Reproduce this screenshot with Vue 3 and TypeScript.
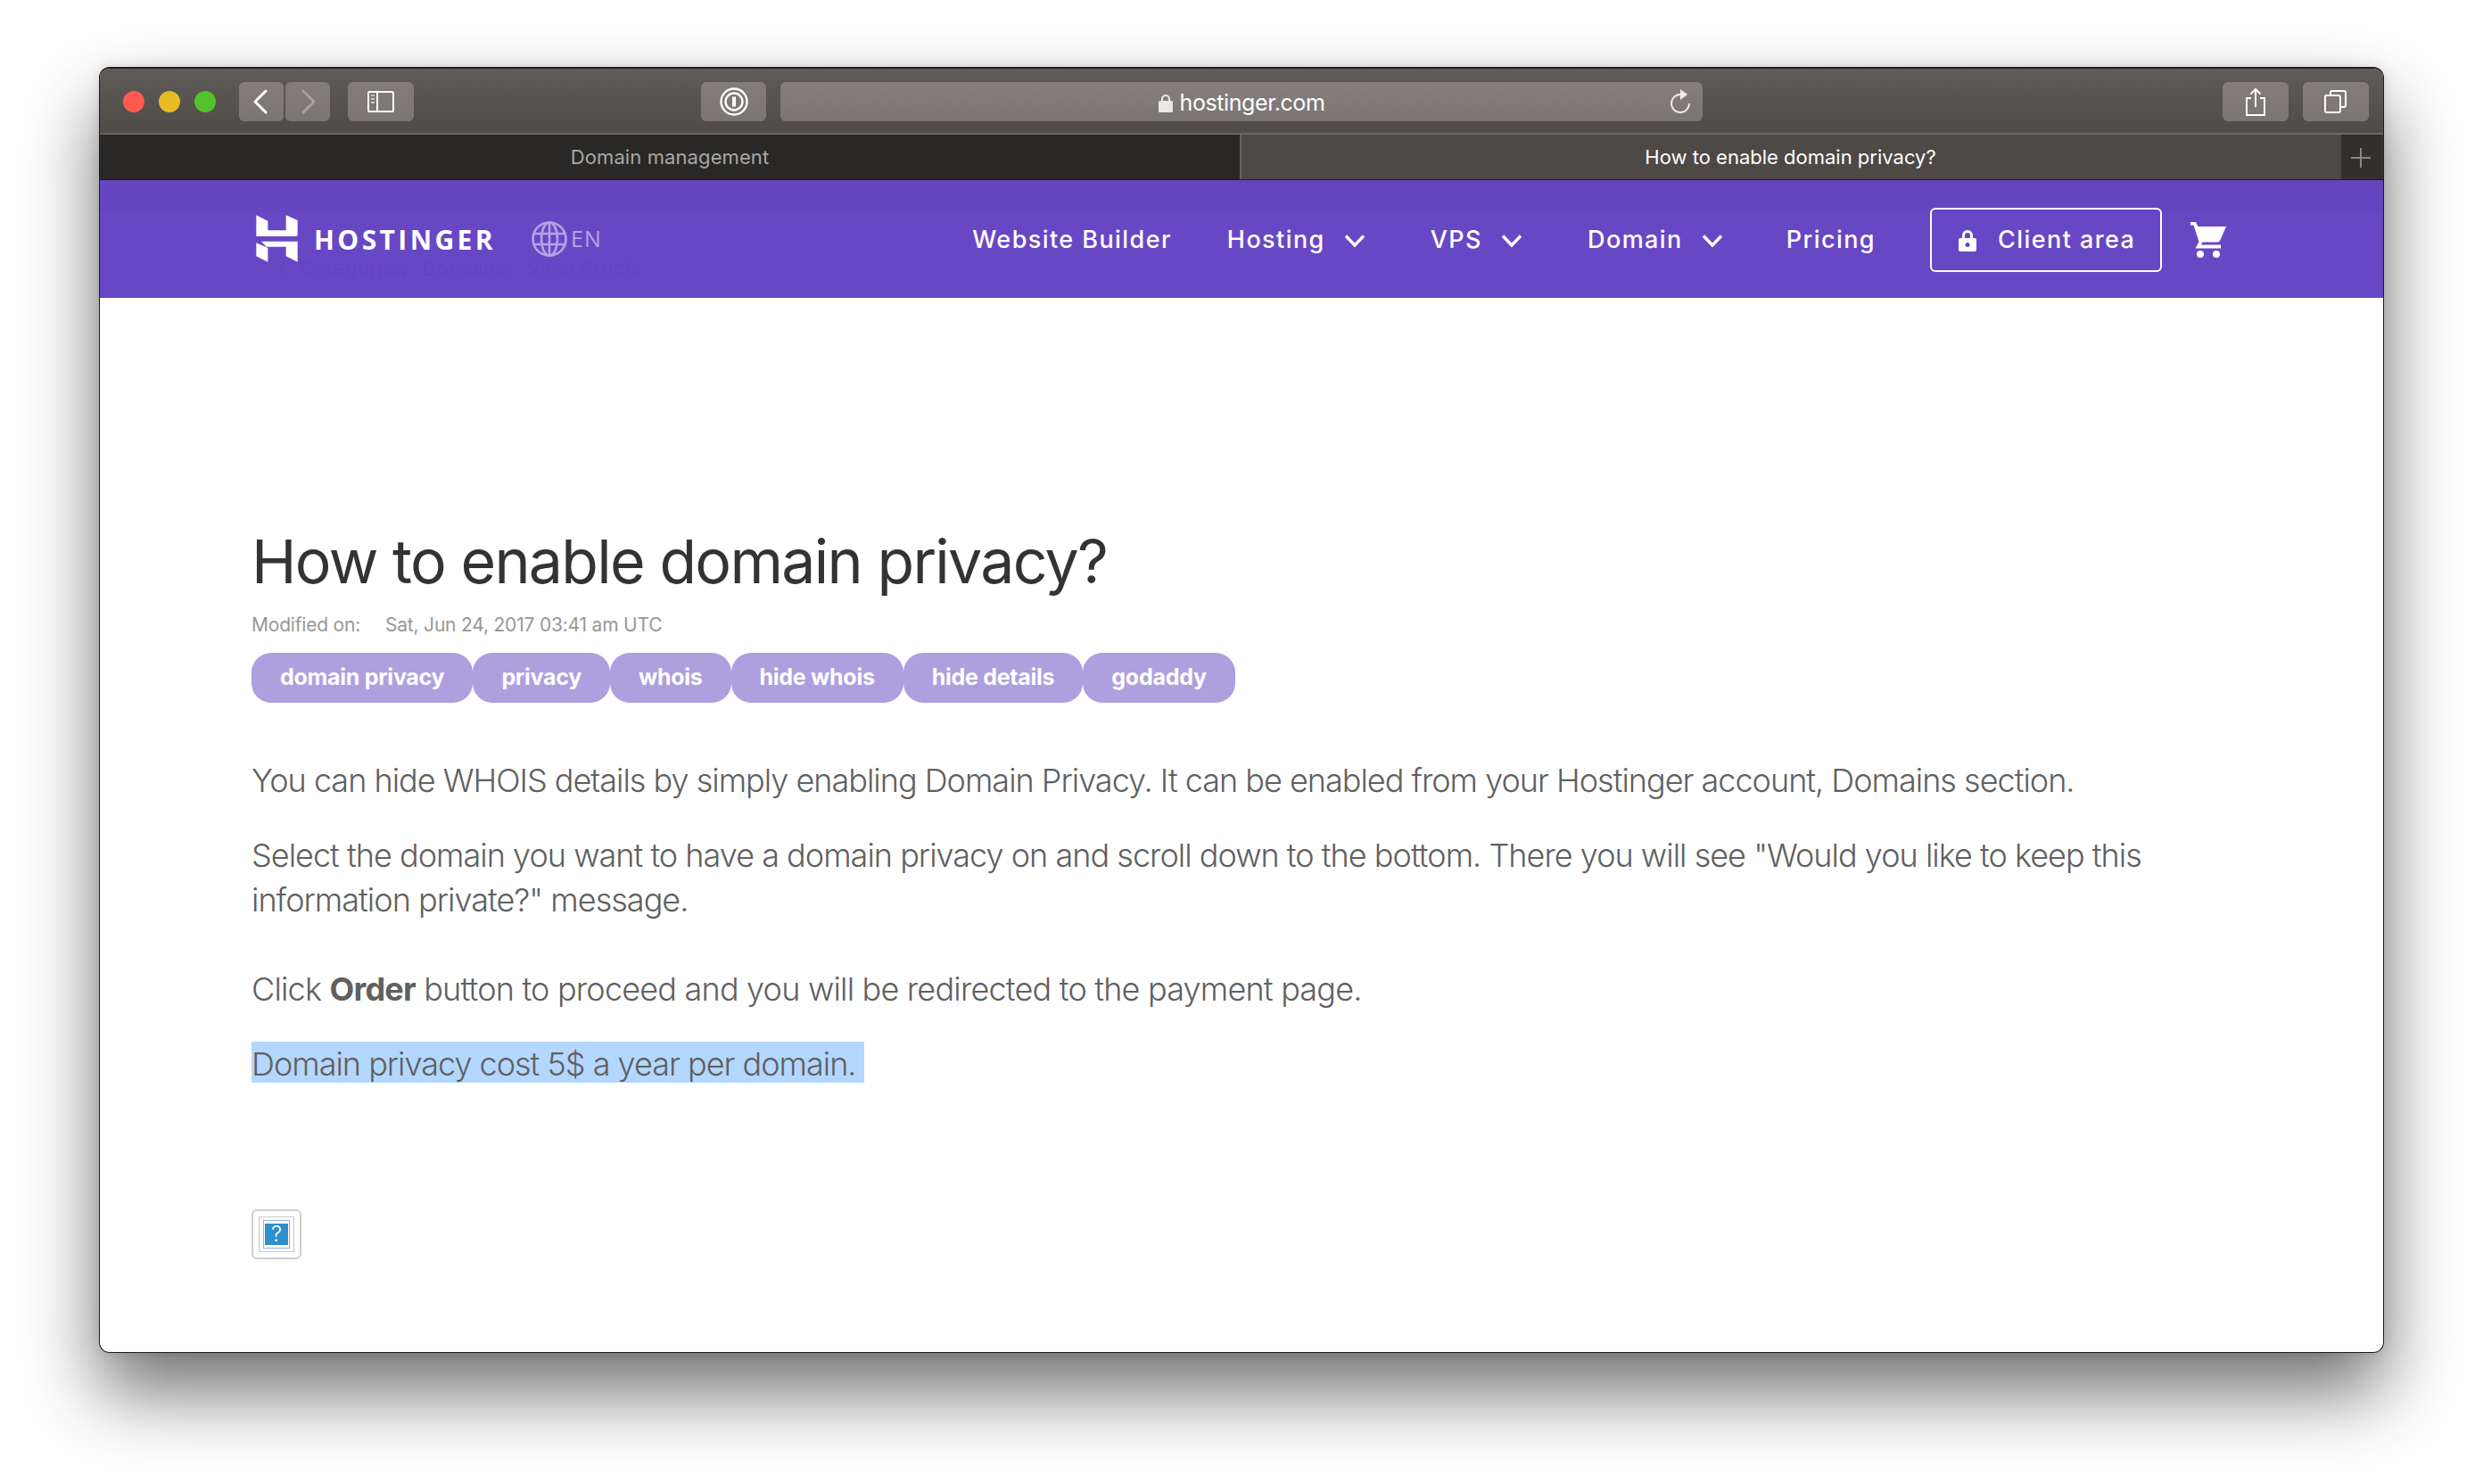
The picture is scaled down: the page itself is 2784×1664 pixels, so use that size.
<script setup lang="ts">
const tags: string[] = ['domain privacy', 'privacy', 'whois', 'hide whois', 'hide details', 'godaddy']
</script>

<template>
  <div class="desk">
    <div class="win">
      <div class="toolbar">
        <div class="lights">
          <span class="light red"></span>
          <span class="light yellow"></span>
          <span class="light green"></span>
        </div>
        <div class="btn nav-btn">
          <svg width="24" height="28" viewBox="0 0 24 28" fill="none" stroke="#fff" stroke-width="3" stroke-linecap="round" stroke-linejoin="round"><path d="M17 2 5 14l12 12" /></svg>
        </div>
        <div class="btn nav-btn second">
          <svg width="24" height="28" viewBox="0 0 24 28" fill="none" stroke="#a5a19e" stroke-width="3" stroke-linecap="round" stroke-linejoin="round"><path d="M7 2l12 12L7 26" /></svg>
        </div>
        <div class="btn side-btn">
          <svg width="30" height="24" viewBox="0 0 30 24" fill="none" stroke="#fff" stroke-width="2"><rect x="1" y="1" width="28" height="22" rx="1.5" /><path d="M11 1v22" /><path d="M4 5h4M4 9h4M4 13h4" stroke="#c8c6c4" /></svg>
        </div>
        <div class="btn pw-btn">
          <svg width="32" height="32" viewBox="0 0 32 32" fill="none" stroke="#fff"><circle cx="16" cy="16" r="14.5" stroke-width="2.4" /><circle cx="16" cy="16" r="9.5" stroke-width="2.4" /><path d="M16 10.5v11" stroke-width="4" /></svg>
        </div>
        <div class="address">
          <span class="addr-main">
            <svg class="addr-lock" width="16" height="21" viewBox="0 0 16 21" fill="#e9e8e7"><path d="M3 9V6a5 5 0 0 1 10 0v3h-2V6a3 3 0 0 0-6 0v3z" /><rect y="8" width="16" height="13" rx="1.500" /></svg>
            hostinger.com
          </span>
          <svg class="reload" width="24" height="28" viewBox="0 0 24 28" fill="none" stroke="#eeedec" stroke-width="1.800"><path d="M11 7A10 10 0 1 0 21 17" /><path d="M11 1l8 6-8 6z" fill="#eeedec" stroke="none" /></svg>
        </div>
        <div class="btn share-btn">
          <svg width="24" height="32" viewBox="0 0 24 32" fill="none" stroke="#fff" stroke-width="2"><path d="M7 12H2v19h20V12h-5" /><path d="M12 22V2M6.500 7.500 12 2l5.500 5.500" /></svg>
        </div>
        <div class="btn tabs-btn">
          <svg width="26" height="26" viewBox="0 0 26 26" fill="none" stroke="#fff" stroke-width="2"><rect x="1" y="6" width="17" height="19" rx="2" /><path d="M7 6V3a2 2 0 0 1 2-2h13a2 2 0 0 1 2 2v14a2 2 0 0 1-2 2h-4" /></svg>
        </div>
      </div>
      <div class="tabs">
        <div class="tab off">Domain management</div>
        <div class="tab on">How to enable domain privacy?</div>
        <div class="plus"><span class="plus-h"></span><span class="plus-v"></span></div>
      </div>
      <header class="site">
        <div class="ghost">
          <span class="g1">/</span><span class="g2">Categories</span><span class="g3">/</span><span class="g4">Domains</span><span class="g5">/</span><span class="g6">View Article</span>
        </div>
        <svg class="logo" width="47" height="53" viewBox="80 66 141 159" fill="#fff">
          <path d="M81 67l39 19v32h85l15 20H81z" />
          <path d="M181 67l39 17v50l-39-16z" />
          <path d="M81 160l39 17v47l-39-19z" />
          <path d="M98 155h122v69l-39-19v-32h-66z" />
        </svg>
        <span class="brand">HOSTINGER</span>
        <svg class="globe" width="40" height="40" viewBox="0 0 40 40" fill="none" stroke="#b3a4e6" stroke-width="2.600"><circle cx="20" cy="20" r="18.500" /><ellipse cx="20" cy="20" rx="9" ry="18.500" /><path d="M2 14h36M2 26h36M20 2v36" /></svg>
        <span class="lang">EN</span>
        <nav class="menu">
          <a class="item w">Website Builder</a>
          <a class="item h">Hosting<svg class="chev" width="24" height="16" viewBox="0 0 24 16" fill="none" stroke="#fff" stroke-width="3.400"><path d="M2 2.500l10 10.500L22 2.500" /></svg></a>
          <a class="item v">VPS<svg class="chev" width="24" height="16" viewBox="0 0 24 16" fill="none" stroke="#fff" stroke-width="3.400"><path d="M2 2.500l10 10.500L22 2.500" /></svg></a>
          <a class="item d">Domain<svg class="chev" width="24" height="16" viewBox="0 0 24 16" fill="none" stroke="#fff" stroke-width="3.400"><path d="M2 2.500l10 10.500L22 2.500" /></svg></a>
          <a class="item p">Pricing</a>
          <a class="client">
            <svg width="20" height="25" viewBox="0 0 20 25" fill="#fff"><path fill-rule="evenodd" d="M4 10V7a6 6 0 0 1 12 0v3h2a2 2 0 0 1 2 2v11a2 2 0 0 1-2 2H2a2 2 0 0 1-2-2V12a2 2 0 0 1 2-2zm3 0h6V7a3 3 0 0 0-6 0zm3 5a2.500 2.500 0 1 0 0 5 2.500 2.500 0 0 0 0-5z" /></svg>
            <span>Client area</span>
          </a>
          <svg class="cart" width="40" height="40" viewBox="0 0 40 40" fill="#fff"><path d="M0 0h6l2.500 5H40l-6.500 15-2 2.500H13.500l-1.500 3h22v4H5.500l4-7.500L3.500 3.500H0z" /><circle cx="11" cy="36" r="4" /><circle cx="29" cy="36" r="4" /></svg>
        </nav>
      </header>
      <main class="page">
        <h1>How to enable domain privacy?</h1>
        <div class="meta"><span class="meta-l">Modified on:</span><span>Sat, Jun 24, 2017 03:41 am UTC</span></div>
        <div class="tags"><span v-for="t in tags" :key="t" class="tag">{{ t }}</span></div>
        <p class="p1">You can hide WHOIS details by simply enabling Domain Privacy. It can be enabled from your Hostinger account, Domains section.</p>
        <p class="p2">Select the domain you want to have a domain privacy on and scroll down to the bottom. There you will see "Would you like to keep this information private?" message.</p>
        <p class="p3">Click <b>Order</b> button to proceed and you will be redirected to the payment page.</p>
        <p class="p4"><span class="sel">Domain privacy cost 5$ a year per domain.&nbsp;</span></p>
        <div class="broken">
          <div class="broken-in"><div class="broken-blue"><div class="broken-fill">?</div></div></div>
        </div>
      </main>
    </div>
  </div>
</template>

<style>
body { margin: 0; background: #fff; }
</style>

<style scoped>
.desk { width: 2784px; height: 1664px; padding: 75px 0 0 111px; box-sizing: border-box; overflow: hidden; background: #fff; font-family: Inter, "Liberation Sans", sans-serif; }
.win { width: 2562px; height: 1442px; box-sizing: border-box; border: 1px solid #1f1e1d; border-top-width: 2px; border-radius: 12px; overflow: hidden; background: #fff; box-shadow: 0 44px 84px rgba(0,0,0,.56), 0 0 14px rgba(0,0,0,.12); display: flex; flex-direction: column; }
.toolbar { height: 74px; flex: none; box-sizing: border-box; display: flex; align-items: flex-start; padding-top: 15px; background: linear-gradient(#5f5b57, #4f4b47); border-bottom: 2px solid #6b6865; }
.lights { display: flex; gap: 16px; margin: 10px 0 0 26px; width: 130px; }
.light { width: 24px; height: 24px; border-radius: 50%; }
.red { background: #ff5a52; }
.yellow { background: #e6bb26; }
.green { background: #52c32a; }
.btn { height: 44px; border-radius: 6px; background: linear-gradient(#827d79, #7b7672); display: flex; align-items: center; justify-content: center; flex: none; }
.nav-btn { width: 50px; }
.second { margin-left: 2px; }
.side-btn { width: 74px; margin-left: 20px; }
.pw-btn { width: 73px; margin-left: 322px; }
.address { width: 1034px; height: 44px; box-sizing: border-box; padding-top: 2px; margin-left: 16px; border-radius: 6px; background: linear-gradient(#85807c, #7a7571); position: relative; display: flex; align-items: center; justify-content: center; flex: none; color: #fff; font-size: 25px; letter-spacing: -.4px; }
.addr-main { display: flex; align-items: center; gap: 8px; }
.reload { position: absolute; right: 12px; top: 7px; }
.share-btn { width: 74px; margin-left: 583px; }
.tabs-btn { width: 74px; margin-left: 16px; }
.tabs { height: 50px; flex: none; display: flex; font-size: 22px; background: #292826; }
.tab { display: flex; align-items: center; justify-content: center; box-sizing: border-box; }
.off { width: 1278px; color: #a9a7a5; letter-spacing: .1px; }
.on { width: 1233px; color: #fff; background: #4d4945; border-left: 2px solid #66635f; letter-spacing: 0; }
.plus { flex: 1; position: relative; border-left: 2px solid #4a4744; background: #32302e; }
.plus-h { position: absolute; left: 11px; top: 25px; width: 22px; height: 2px; background: #8a8886; }
.plus-v { position: absolute; left: 21px; top: 15px; width: 2px; height: 22px; background: #8a8886; }
.site { height: 133px; flex: none; position: relative; display: flex; align-items: center; background: linear-gradient(#6445bf 0, #6445bf 38px, #6847c5 38px); box-shadow: inset 0 1px 0 #1f1e1d; padding: 3px 0 0 175px; color: #fff; box-sizing: border-box; }
.ghost { position: absolute; left: 0; top: 85px; height: 30px; font-size: 23px; line-height: 30px; color: #6444bf; }
.ghost span { position: absolute; white-space: nowrap; }
.g1 { left: 200px; } .g2 { left: 224px; } .g3 { left: 339px; } .g4 { left: 361px; } .g5 { left: 456px; } .g6 { left: 478px; }
.logo { flex: none; margin-top: -3px; }
.brand { font-family: "Open Sans", sans-serif; font-weight: 700; font-size: 30px; line-height: 30px; letter-spacing: 3.4px; margin-left: 18px; margin-top: -1px; white-space: nowrap; }
.globe { flex: none; margin-left: 40px; margin-top: -2px; }
.lang { font-family: "Open Sans", sans-serif; font-size: 25px; line-height: 30px; color: #b3a4e6; margin-left: 4px; letter-spacing: 1.2px; margin-top: -4px; }
.menu { display: flex; align-items: center; margin-left: auto; padding-right: 176px; font-size: 27px; line-height: 34px; font-weight: 500; letter-spacing: 1.43px; }
.item { display: flex; align-items: center; white-space: nowrap; }
.chev { margin-left: 21px; margin-top: 1px; }
.h { margin-left: 62px; }
.v, .d { margin-left: 73px; }
.p { margin-left: 71px; }
.client { margin-left: 61px; margin-right: 32px; width: 260px; height: 72px; box-sizing: border-box; border: 2px solid #fff; border-radius: 6px; display: flex; align-items: center; padding-left: 30px; gap: 24px; white-space: nowrap; }
.cart { flex: none; }
.page { padding: 253px 0 0 170px; flex: 1; color: #606060; }
h1 { margin: 0; font-size: 68px; line-height: 84px; font-weight: 400; letter-spacing: -1.7px; color: #333; }
.meta { margin-top: 15px; height: 30px; line-height: 30px; font-size: 21px; letter-spacing: -.2px; color: #979797; display: flex; }
.meta-l { width: 150px; }
.tags { display: flex; margin-top: 16px; }
.tag { height: 56px; line-height: 54px; padding: 0 32px; border-radius: 22px; background: #ae9fdf; color: #fff; font-size: 25px; font-weight: 700; letter-spacing: -.27px; white-space: nowrap; }
p { margin: 0; font-size: 36px; line-height: 50px; font-weight: 300; letter-spacing: -1px; width: 2130px; }
.p1 { margin-top: 62px; }
.p2 { margin-top: 34px; letter-spacing: -.98px; }
.p3 { margin-top: 50px; letter-spacing: -.8px; }
.p4 { margin-top: 34px; }
.sel { display: inline-block; height: 46px; line-height: 50px; background: #b3d7fe; }
b { font-weight: 700; }
.broken { margin-top: 138px; width: 56px; height: 56px; box-sizing: border-box; border: 2px solid #cfcfcf; border-radius: 6px; padding: 6px; }
.broken-in { width: 40px; height: 40px; box-sizing: border-box; border: 1px solid #c9c9c9; padding: 3px 4px; }
.broken-blue { width: 30px; height: 32px; box-sizing: border-box; border: 1px solid #8fb4dc; padding: 3px 1px; }
.broken-fill { height: 24px; background: #2d8fce; color: #fff; font-size: 24px; line-height: 24px; text-align: center; font-weight: 300; }
</style>
